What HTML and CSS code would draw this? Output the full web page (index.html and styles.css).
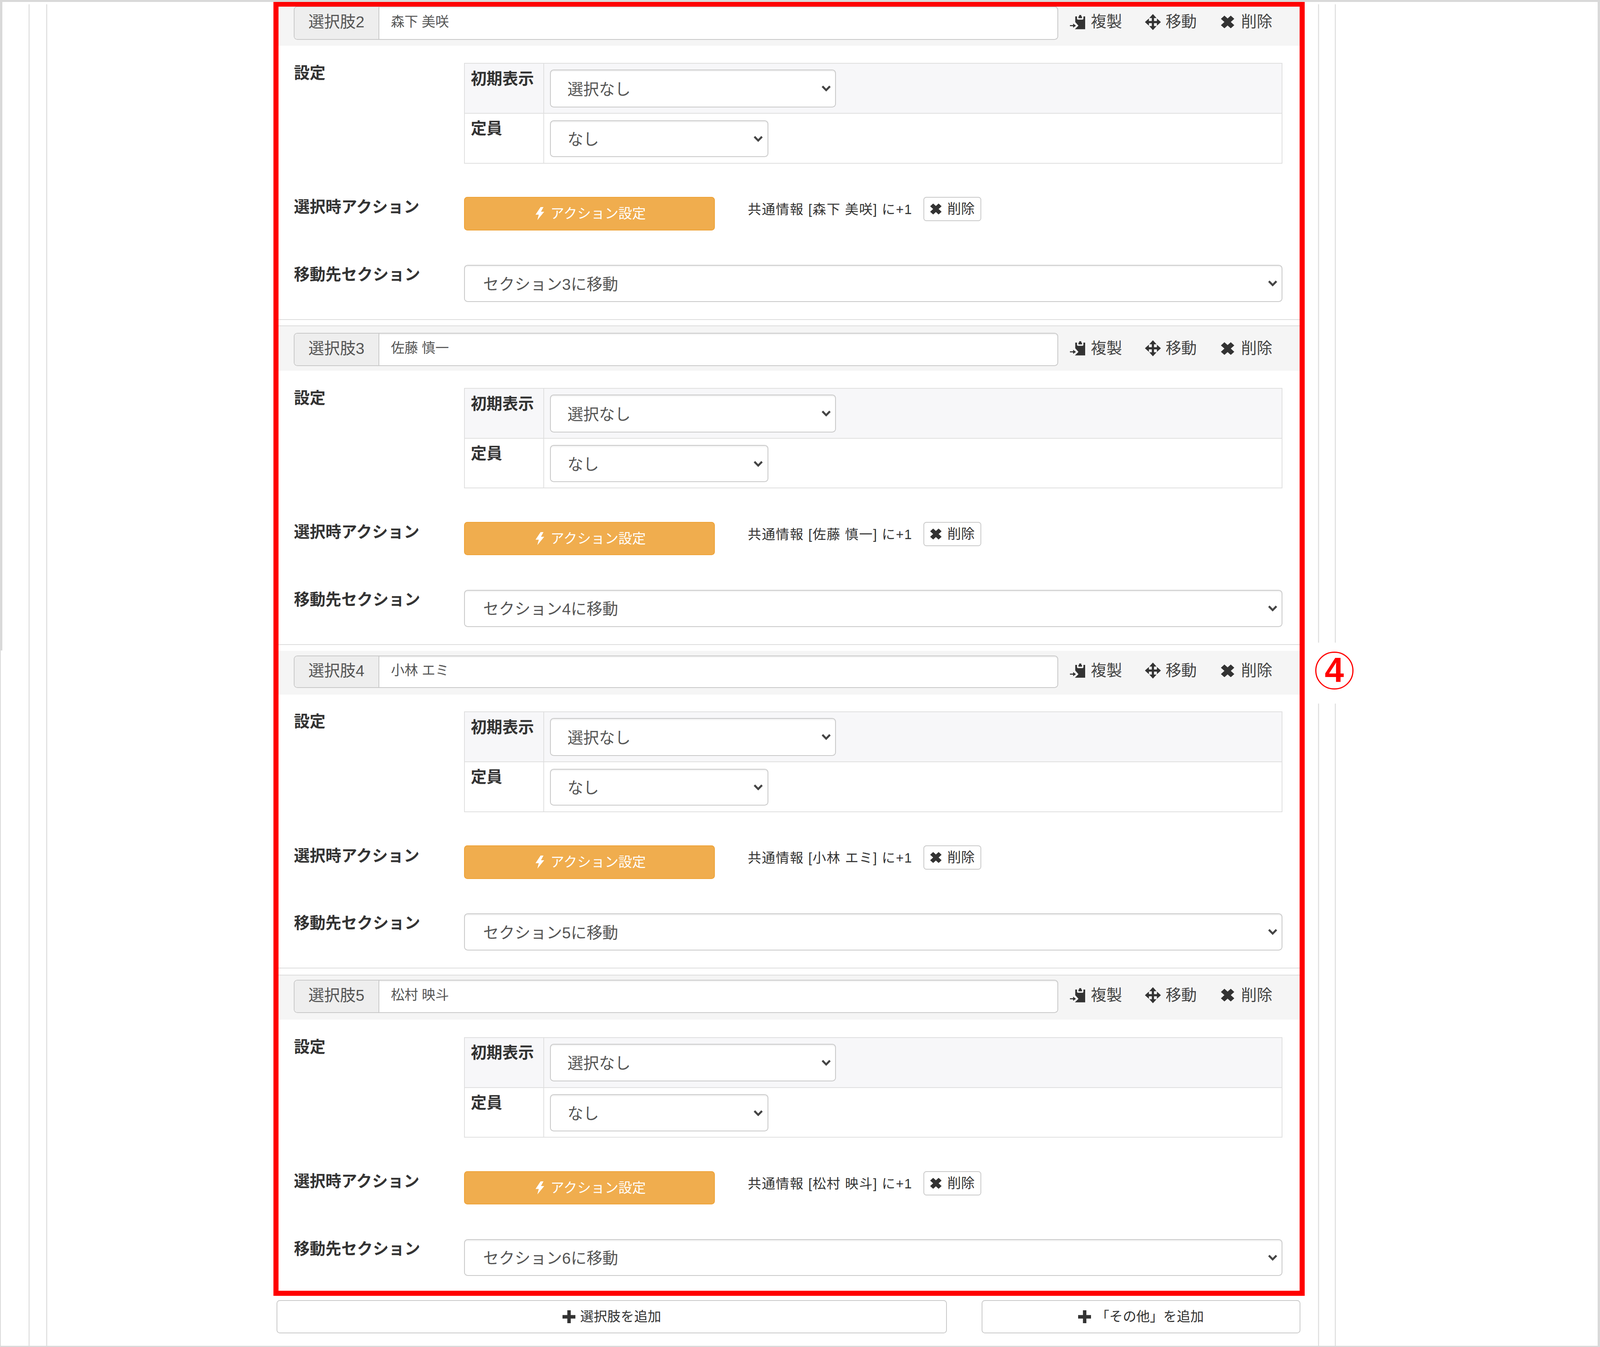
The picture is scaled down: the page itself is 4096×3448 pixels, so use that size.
FILE: index.html
```html
<!DOCTYPE html>
<html lang="ja">
<head>
<meta charset="utf-8">
<title>選択肢の設定</title>
<link rel="stylesheet" href="styles.css">
</head>
<body>
<svg class="defs" width="0" height="0" aria-hidden="true">
  <symbol id="i-copy" viewBox="0 0 43 40"><path d="M15 4H20V10Q20 13 23 13H35Q38 13 38 10V4H43V40H14L24 30L15 20Z"/><path d="M24 4H26V0H32V4H34V9H24Z"/><path d="M0 28.5H9V24L17 30L9 36V31.5H0Z"/></symbol>
  <symbol id="i-move" viewBox="0 0 44 44"><path d="M22 0L32 11H25V19H33V12L44 22L33 32V25H25V33H32L22 44L12 33H19V25H11V32L0 22L11 12V19H19V11H12Z"/></symbol>
  <symbol id="i-x" viewBox="0 0 38 36"><path d="M10 0L19 8L28 0L38 9L28 18L38 27L28 36L19 28L10 36L0 27L10 18L0 9Z"/></symbol>
  <symbol id="i-plus" viewBox="0 0 38 38"><path d="M14 0H24V14H38V24H24V38H14V24H0V14H14Z"/></symbol>
  <symbol id="i-bolt" viewBox="0 0 25 36"><path d="M15 0L1 21H10L6 36L25 13H16L23 0Z"/></symbol>
</svg>
<div class="page">
  <div class="rail-outer">
    <div class="rail-inner">
      <main class="column">

        <section class="choice">
          <div class="choice-head">
            <div class="name-group"><span class="name-addon">選択肢2</span><div class="name-field">森下 美咲</div></div>
            <div class="tools">
              <span class="tool tool-copy"><svg class="ico ico-copy"><use href="#i-copy"/></svg>複製</span>
              <span class="tool tool-move"><svg class="ico ico-move"><use href="#i-move"/></svg>移動</span>
              <span class="tool tool-del"><svg class="ico ico-x"><use href="#i-x"/></svg>削除</span>
            </div>
          </div>
          <div class="choice-body">
            <div class="row row-settings">
              <div class="row-label">設定</div>
              <table class="settings">
                <tr class="shaded"><th>初期表示</th><td><select class="sel sel-display"><option>選択なし</option></select></td></tr>
                <tr class="plain"><th>定員</th><td><select class="sel sel-cap"><option>なし</option></select></td></tr>
              </table>
            </div>
            <div class="row row-action">
              <div class="row-label">選択時アクション</div>
              <div class="action-line">
                <button class="btn-action"><svg class="ico ico-bolt"><use href="#i-bolt"/></svg>アクション設定</button>
                <span class="action-note">共通情報 [森下 美咲] に+1</span>
                <button class="btn-small"><svg class="ico ico-x-small"><use href="#i-x"/></svg>削除</button>
              </div>
            </div>
            <div class="row">
              <div class="row-label">移動先セクション</div>
              <select class="sel sel-wide"><option>セクション3に移動</option></select>
            </div>
          </div>
        </section>

        <section class="choice">
          <div class="choice-head">
            <div class="name-group"><span class="name-addon">選択肢3</span><div class="name-field">佐藤 慎一</div></div>
            <div class="tools">
              <span class="tool tool-copy"><svg class="ico ico-copy"><use href="#i-copy"/></svg>複製</span>
              <span class="tool tool-move"><svg class="ico ico-move"><use href="#i-move"/></svg>移動</span>
              <span class="tool tool-del"><svg class="ico ico-x"><use href="#i-x"/></svg>削除</span>
            </div>
          </div>
          <div class="choice-body">
            <div class="row row-settings">
              <div class="row-label">設定</div>
              <table class="settings">
                <tr class="shaded"><th>初期表示</th><td><select class="sel sel-display"><option>選択なし</option></select></td></tr>
                <tr class="plain"><th>定員</th><td><select class="sel sel-cap"><option>なし</option></select></td></tr>
              </table>
            </div>
            <div class="row row-action">
              <div class="row-label">選択時アクション</div>
              <div class="action-line">
                <button class="btn-action"><svg class="ico ico-bolt"><use href="#i-bolt"/></svg>アクション設定</button>
                <span class="action-note">共通情報 [佐藤 慎一] に+1</span>
                <button class="btn-small"><svg class="ico ico-x-small"><use href="#i-x"/></svg>削除</button>
              </div>
            </div>
            <div class="row">
              <div class="row-label">移動先セクション</div>
              <select class="sel sel-wide"><option>セクション4に移動</option></select>
            </div>
          </div>
        </section>

        <section class="choice">
          <div class="choice-head">
            <div class="name-group"><span class="name-addon">選択肢4</span><div class="name-field">小林 エミ</div></div>
            <div class="tools">
              <span class="tool tool-copy"><svg class="ico ico-copy"><use href="#i-copy"/></svg>複製</span>
              <span class="tool tool-move"><svg class="ico ico-move"><use href="#i-move"/></svg>移動</span>
              <span class="tool tool-del"><svg class="ico ico-x"><use href="#i-x"/></svg>削除</span>
            </div>
          </div>
          <div class="choice-body">
            <div class="row row-settings">
              <div class="row-label">設定</div>
              <table class="settings">
                <tr class="shaded"><th>初期表示</th><td><select class="sel sel-display"><option>選択なし</option></select></td></tr>
                <tr class="plain"><th>定員</th><td><select class="sel sel-cap"><option>なし</option></select></td></tr>
              </table>
            </div>
            <div class="row row-action">
              <div class="row-label">選択時アクション</div>
              <div class="action-line">
                <button class="btn-action"><svg class="ico ico-bolt"><use href="#i-bolt"/></svg>アクション設定</button>
                <span class="action-note">共通情報 [小林 エミ] に+1</span>
                <button class="btn-small"><svg class="ico ico-x-small"><use href="#i-x"/></svg>削除</button>
              </div>
            </div>
            <div class="row">
              <div class="row-label">移動先セクション</div>
              <select class="sel sel-wide"><option>セクション5に移動</option></select>
            </div>
          </div>
        </section>

        <section class="choice">
          <div class="choice-head">
            <div class="name-group"><span class="name-addon">選択肢5</span><div class="name-field">松村 映斗</div></div>
            <div class="tools">
              <span class="tool tool-copy"><svg class="ico ico-copy"><use href="#i-copy"/></svg>複製</span>
              <span class="tool tool-move"><svg class="ico ico-move"><use href="#i-move"/></svg>移動</span>
              <span class="tool tool-del"><svg class="ico ico-x"><use href="#i-x"/></svg>削除</span>
            </div>
          </div>
          <div class="choice-body">
            <div class="row row-settings">
              <div class="row-label">設定</div>
              <table class="settings">
                <tr class="shaded"><th>初期表示</th><td><select class="sel sel-display"><option>選択なし</option></select></td></tr>
                <tr class="plain"><th>定員</th><td><select class="sel sel-cap"><option>なし</option></select></td></tr>
              </table>
            </div>
            <div class="row row-action">
              <div class="row-label">選択時アクション</div>
              <div class="action-line">
                <button class="btn-action"><svg class="ico ico-bolt"><use href="#i-bolt"/></svg>アクション設定</button>
                <span class="action-note">共通情報 [松村 映斗] に+1</span>
                <button class="btn-small"><svg class="ico ico-x-small"><use href="#i-x"/></svg>削除</button>
              </div>
            </div>
            <div class="row">
              <div class="row-label">移動先セクション</div>
              <select class="sel sel-wide"><option>セクション6に移動</option></select>
            </div>
          </div>
        </section>

        <div class="add-row">
          <button class="btn-add btn-add-choice"><svg class="ico ico-plus"><use href="#i-plus"/></svg>選択肢を追加</button>
          <button class="btn-add btn-add-other"><svg class="ico ico-plus"><use href="#i-plus"/></svg>「その他」を追加</button>
        </div>

      </main>
    </div>
  </div>
  <div class="page-edge"></div>
  <div class="highlight"></div>
  <div class="callout"><span class="callout-num">4</span></div>
</div>
</body>
</html>
```

FILE: styles.css
```css
html, body {
  margin: 0;
  padding: 0;
  background: #fff;
  overflow: hidden;
}

.defs {
  position: absolute;
}

.page {
  zoom: 0.92942;
  position: relative;
  box-sizing: border-box;
  width: 4407px;
  height: 3710px;
  overflow: hidden;
  background: #fff;
  border-style: solid;
  border-color: #d9d9d9;
  border-width: 6px 7px 4px 3px;
  font-family: "Liberation Sans", "Noto Sans CJK JP", sans-serif;
  font-size: 43.5px;
  color: #333;
}

.page-edge {
  position: absolute;
  left: 0;
  top: 0;
  width: 4px;
  height: 1786px;
  background: #d9d9d9;
}

.rail-outer {
  box-sizing: border-box;
  height: 100%;
  margin: 6px 0 0 76px;
  width: 3602px;
  border-left: 4px solid #e2e2e2;
  border-right: 4px solid #e2e2e2;
}

.rail-inner {
  box-sizing: border-box;
  height: 100%;
  margin: 0 44px 0 46px;
  border-left: 4px solid #e2e2e2;
  border-right: 4px solid #e2e2e2;
}

.column {
  width: 2820px;
  margin-left: 631px;
}

/* A choice block: header strip + body */
.choice {
  --head-h: 115px;
  --head-pad: 6px;
  --group-h: 92px;
  --head-line: #f5f5f5;
  --after: 15px;
  --body-top: 47px;
  margin-bottom: var(--after);
}

.choice:nth-child(2) {
  --head-h: 125px;
  --head-pad: 18px;
  --head-line: #dcdcdc;
  --after: 16px;
}

.choice:nth-child(3) {
  --head-h: 120px;
  --head-pad: 11px;
  --group-h: 89px;
  --after: 17px;
}

.choice:nth-child(4) {
  --head-h: 124px;
  --head-pad: 12px;
  --group-h: 91px;
  --head-line: #dcdcdc;
  --body-top: 48px;
  --after: 0;
}

.choice-head {
  box-sizing: border-box;
  display: flex;
  align-items: flex-start;
  height: var(--head-h);
  padding: var(--head-pad) 0 0 47px;
  background: #f5f5f5;
  border-top: 3px solid var(--head-line);
}

.choice:first-child .choice-head {
  border-top: 0;
}

.name-group {
  box-sizing: border-box;
  display: flex;
  width: 2106px;
  height: var(--group-h);
  background: #fff;
  border: 3px solid #c8c8c8;
  border-radius: 10px;
  box-shadow: inset 0 3px 3px rgba(0, 0, 0, 0.06);
}

.name-addon {
  box-sizing: border-box;
  display: flex;
  align-items: center;
  justify-content: center;
  width: 234px;
  padding-bottom: 6px;
  background: #eee;
  border-right: 3px solid #c8c8c8;
  border-radius: 7px 0 0 7px;
  color: #555;
  line-height: 1;
}

.name-field {
  display: flex;
  align-items: center;
  padding: 0 0 6px 32px;
  color: #555;
  font-size: 37.4px;
  line-height: 1;
}

.tools {
  display: flex;
  align-items: center;
  height: var(--group-h);
  margin-top: -3px;
  color: #444;
  font-size: 43px;
  line-height: 1;
}

.tool {
  display: flex;
  align-items: center;
}

.tool-copy { margin-left: 32px; }
.tool-move { margin-left: 63px; }
.tool-del  { margin-left: 66px; }

.ico {
  display: block;
  flex: none;
  fill: #333;
}

.ico-copy { width: 42px; height: 40px; margin-right: 16px; }
.ico-move { width: 44px; height: 44px; margin-right: 13px; }
.ico-x { width: 38px; height: 35px; margin-right: 18px; }
.ico-x-small { width: 32px; height: 30px; margin-right: 16px; }
.ico-plus { width: 36px; height: 36px; margin-right: 13px; }
.ico-bolt { width: 25px; height: 36px; margin-right: 17px; fill: #fff; }

.choice-body {
  padding: var(--body-top) 49px 48px 48px;
  border-bottom: 3px solid #dcdcdc;
}

.choice:nth-child(4) .choice-body {
  padding-bottom: 0;
  border-bottom: 0;
}

.row {
  display: grid;
  grid-template-columns: 469px 1fr;
  align-items: start;
}

.row-settings { height: 277px; margin-bottom: 92px; }
.row-action { height: 92px; margin-bottom: 95px; }

.row-label {
  padding-top: 7px;
  font-weight: bold;
  line-height: 42px;
}

.row-action .row-label {
  padding-top: 8px;
}

/* Settings table */
.settings {
  width: 100%;
  height: 277px;
  border-collapse: collapse;
  table-layout: fixed;
  border: 3px solid #dfdfdf;
}

.settings tr {
  height: 50%;
}

.settings th,
.settings td {
  padding: 0;
  border: 3px solid #dfdfdf;
  vertical-align: top;
}

.settings th {
  width: 200px;
  padding: 21px 0 0 16px;
  text-align: left;
  font-weight: bold;
  line-height: 42px;
}

.settings td {
  padding: 16px 0 0 16px;
}

.settings .plain td {
  padding-top: 18px;
}

.settings .shaded th,
.settings .shaded td {
  background: #f7f7f9;
}

/* Selects */
.sel {
  appearance: none;
  -webkit-appearance: none;
  display: block;
  box-sizing: border-box;
  height: 102px;
  margin: 0;
  padding: 5px 50px 0 46px;
  color: #555;
  font-family: inherit;
  font-size: 43.5px;
  background-color: #fff;
  background-image: url("data:image/svg+xml,%3Csvg xmlns='http://www.w3.org/2000/svg' viewBox='0 0 26 17'%3E%3Cpath d='M2.5 3L13 13.5L23.5 3' fill='none' stroke='%23444' stroke-width='5.5'/%3E%3C/svg%3E");
  background-repeat: no-repeat;
  background-position: right 12px center;
  background-size: 26px 17px;
  border: 3px solid #c8c8c8;
  border-radius: 10px;
  box-shadow: inset 0 3px 3px rgba(0, 0, 0, 0.06);
}

.sel-display { width: 788px; height: 104px; }
.sel-cap { width: 601px; }
.sel-wide { width: 100%; height: 102px; padding-left: 50px; }

/* Action line */
.action-line {
  display: flex;
  align-items: flex-start;
}

.btn-action {
  box-sizing: border-box;
  display: flex;
  align-items: center;
  justify-content: center;
  width: 690px;
  height: 92px;
  padding: 0 0 0 6px;
  background: #f0ad4e;
  border: 3px solid #eea236;
  border-radius: 9px;
  color: #fff;
  font-family: inherit;
  font-size: 37.8px;
  line-height: 1;
}

.action-note {
  width: 484px;
  margin-left: 91px;
  padding-top: 15px;
  color: #333;
  font-size: 37px;
  line-height: 40px;
  letter-spacing: 1.7px;
  white-space: nowrap;
}

.btn-small {
  box-sizing: border-box;
  display: flex;
  align-items: center;
  justify-content: center;
  width: 159px;
  height: 67px;
  padding: 0;
  background: #fff;
  border: 3px solid #c8c8c8;
  border-radius: 8px;
  color: #333;
  font-family: inherit;
  font-size: 37.5px;
  line-height: 1;
}

/* Add buttons */
.add-row {
  display: flex;
  gap: 95px;
  margin-top: 66px;
}

.btn-add {
  box-sizing: border-box;
  display: flex;
  align-items: center;
  justify-content: center;
  height: 92px;
  padding: 0;
  background: #fff;
  border: 3px solid #c8c8c8;
  border-radius: 9px;
  color: #333;
  font-family: inherit;
  font-size: 37.2px;
  line-height: 1;
}

.btn-add-choice { width: 1847px; }
.btn-add-other { width: 878px; }

/* Annotations laid over the screenshot */
.highlight {
  position: absolute;
  left: 751px;
  top: -1px;
  box-sizing: border-box;
  width: 2841px;
  height: 3565px;
  border: 15px solid #f00;
}

.callout {
  position: absolute;
  left: 3612px;
  top: 1765px;
  box-sizing: border-box;
  display: flex;
  align-items: center;
  justify-content: center;
  width: 122px;
  height: 167px;
  padding-bottom: 14px;
  background: #fff;
}

.callout-num {
  box-sizing: border-box;
  display: flex;
  align-items: center;
  justify-content: center;
  width: 105px;
  height: 105px;
  border: 4px solid #f00;
  border-radius: 50%;
  color: #f00;
  font-family: "Liberation Sans", sans-serif;
  font-size: 95px;
  font-weight: bold;
  line-height: 1;
}
```
